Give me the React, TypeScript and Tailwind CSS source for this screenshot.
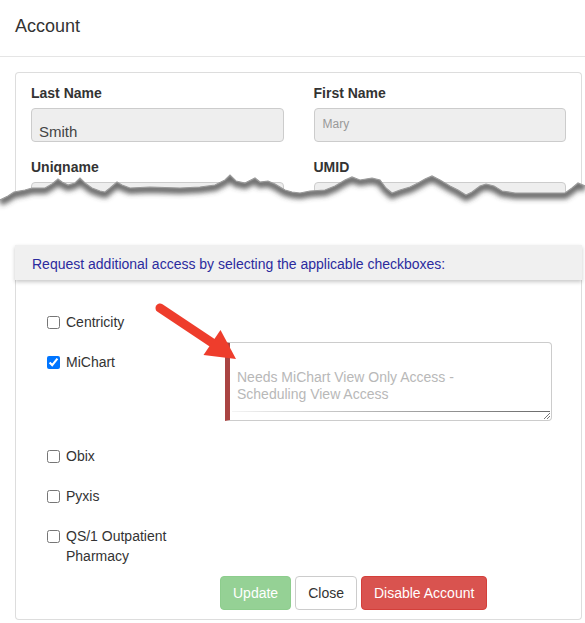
import React from "react";

const tearPts: [number, number][] = [
  [0, 200], [8, 196], [14, 192], [25, 190], [32, 188], [45, 188], [52, 184], [58, 179], [62, 182], [68, 185],
  [75, 183], [80, 178], [85, 183], [92, 188], [100, 191], [105, 192], [110, 188], [117, 182], [122, 185],
  [130, 188], [150, 187], [180, 188], [200, 187], [215, 185], [225, 180], [230, 175], [236, 181], [245, 183],
  [255, 178], [260, 182], [268, 181], [275, 184], [285, 190], [292, 192], [300, 193], [310, 191], [325, 190],
  [335, 186], [345, 180], [352, 177], [360, 180], [372, 178], [380, 180], [386, 188], [392, 193], [400, 190],
  [410, 187], [418, 183], [425, 179], [432, 176], [440, 180], [450, 186], [458, 190], [466, 195], [472, 192],
  [480, 186], [486, 184], [494, 186], [502, 191], [515, 193], [540, 193], [565, 193], [572, 188], [578, 183],
  [585, 186],
];

function Tear() {
  const line = tearPts.map(([x, y]) => `${x},${y}`).join(" ");
  const poly = line + " 585,219 0,219";
  return (
    <svg
      className="absolute left-0 top-0 pointer-events-none"
      width="585"
      height="230"
      viewBox="0 0 585 230"
    >
      <defs>
        <filter id="tearblur" x="-5%" y="-50%" width="110%" height="200%">
          <feGaussianBlur stdDeviation="2.4" />
        </filter>
        <clipPath id="below">
          <polygon points={poly} />
        </clipPath>
      </defs>
      <polygon points={poly} fill="#ffffff" />
      <g clipPath="url(#below)">
        <polyline
          points={line}
          fill="none"
          stroke="#444"
          strokeWidth="8"
          strokeOpacity="0.8"
          filter="url(#tearblur)"
          transform="translate(0,2)"
        />
      </g>
      <polyline points={line} fill="none" stroke="#9a9a9a" strokeWidth="1.2" />
    </svg>
  );
}

function Arrow() {
  return (
    <svg
      className="absolute left-0 top-0 pointer-events-none"
      width="585"
      height="623"
      viewBox="0 0 585 623"
    >
      <line x1="160" y1="308" x2="214" y2="344" stroke="#ee3d2c" strokeWidth="9" strokeLinecap="round" />
      <polygon points="220.5,330 203.5,355 236,359" fill="#ee3d2c" />
    </svg>
  );
}

function Row({ label, checked, children, pb = "pb-[10px]" }: { label: string; checked?: boolean; children?: React.ReactNode; pb?: string }) {
  return (
    <div className={`flex pl-[31px] ${pb}`}>
      <div className="w-[178px] shrink-0 flex items-start gap-[6px] pt-[10px]">
        <input type="checkbox" defaultChecked={checked} className="w-[13px] h-[13px] m-0 mt-[4px] shrink-0" />
        <span className="text-[14px] leading-[20px] text-[#333]">{label}</span>
      </div>
      {children}
    </div>
  );
}

export default function App() {
  return (
    <div className="relative w-[585px] h-[623px] bg-white overflow-hidden" style={{ fontFamily: '"Liberation Sans", Arial, sans-serif' }}>
      <div className="h-[57px] border-b border-[#e5e5e5] pl-[15px] pt-[16px]">
        <div className="text-[18px] leading-[20px] text-[#333]">Account</div>
      </div>

      <div className="ml-[15px] mt-[15px] w-[567px] h-[128px] overflow-hidden border border-b-0 border-[#ddd] rounded-t-[4px] px-[15px] pt-[10px]">
        <div className="grid grid-cols-2 gap-x-[30px] gap-y-[15px]">
          <div>
            <div className="text-[14px] leading-[20px] font-bold text-[#333] mb-[5px]">Last Name</div>
            <div className="h-[34px] bg-[#eeeeee] border border-[#ccc] rounded-[4px] pl-[7px] pt-[14px] text-[15px] leading-[17px] text-[#444]">Smith</div>
          </div>
          <div>
            <div className="text-[14px] leading-[20px] font-bold text-[#333] mb-[5px]">First Name</div>
            <div className="h-[34px] bg-[#eeeeee] border border-[#ccc] rounded-[4px] pl-[8px] pt-[8px] text-[12px] leading-[14px] text-[#999]">Mary</div>
          </div>
          <div>
            <div className="text-[14px] leading-[20px] font-bold text-[#333] mb-[5px]">Uniqname</div>
            <div className="h-[34px] bg-[#eeeeee] border border-[#ccc] rounded-[4px]" />
          </div>
          <div>
            <div className="text-[14px] leading-[20px] font-bold text-[#333] mb-[5px]">UMID</div>
            <div className="h-[34px] bg-[#eeeeee] border border-[#ccc] rounded-[4px]" />
          </div>
        </div>
      </div>

      <div className="ml-[15px] w-[567px] border border-t-0 border-[#ddd] rounded-b-[4px] pb-[9px]">
        <div className="-mx-px mt-[45px] h-[35px] bg-[#f0f0f0] shadow-[0_2px_4px_rgba(0,0,0,0.22)] flex items-center pl-[17px] pt-[2px]">
          <span className="text-[14px] leading-[20px] text-[#2b2b9e]">Request additional access by selecting the applicable checkboxes:</span>
        </div>

        <div className="mt-[22px]">
          <Row label="Centricity" />
          <Row label="MiChart" checked pb="pb-[15px]">
            <div className="relative w-[327px] h-[79px] border border-[#ccc] border-l-[5px] border-l-[#a94442] rounded-r-[4px] pl-[7px] pt-[26px]">
              <div className="text-[14px] leading-[17px] text-[#b8b8b8]">
                Needs MiChart View Only Access -<br />Scheduling View Access
              </div>
              <div className="absolute left-[2px] right-[1px] bottom-[8px] h-px bg-gradient-to-r from-[#f4f4f4] to-[#6a6a6a]" />
              <svg className="absolute right-[1px] bottom-[1px]" width="7" height="7" viewBox="0 0 7 7">
                <line x1="1" y1="7" x2="7" y2="1" stroke="#777" strokeWidth="1" />
                <line x1="4" y1="7" x2="7" y2="4" stroke="#777" strokeWidth="1" />
              </svg>
            </div>
          </Row>
          <Row label="Obix" />
          <Row label="Pyxis" />
          <Row label="QS/1 Outpatient Pharmacy" pb="pb-0" />
        </div>

        <div className="mt-[10px] pl-[204px] flex gap-[4px]">
          <button className="h-[34px] px-[12px] rounded-[4px] bg-[#95d195] border border-[#8dcd8d] text-white text-[14px] leading-[20px]">Update</button>
          <button className="h-[34px] px-[12px] rounded-[4px] bg-white border border-[#ccc] text-[#333] text-[14px] leading-[20px]">Close</button>
          <button className="h-[34px] px-[12px] rounded-[4px] bg-[#d9534f] border border-[#d43f3a] text-white text-[14px] leading-[20px]">Disable Account</button>
        </div>
      </div>

      <Tear />
      <Arrow />
    </div>
  );
}
